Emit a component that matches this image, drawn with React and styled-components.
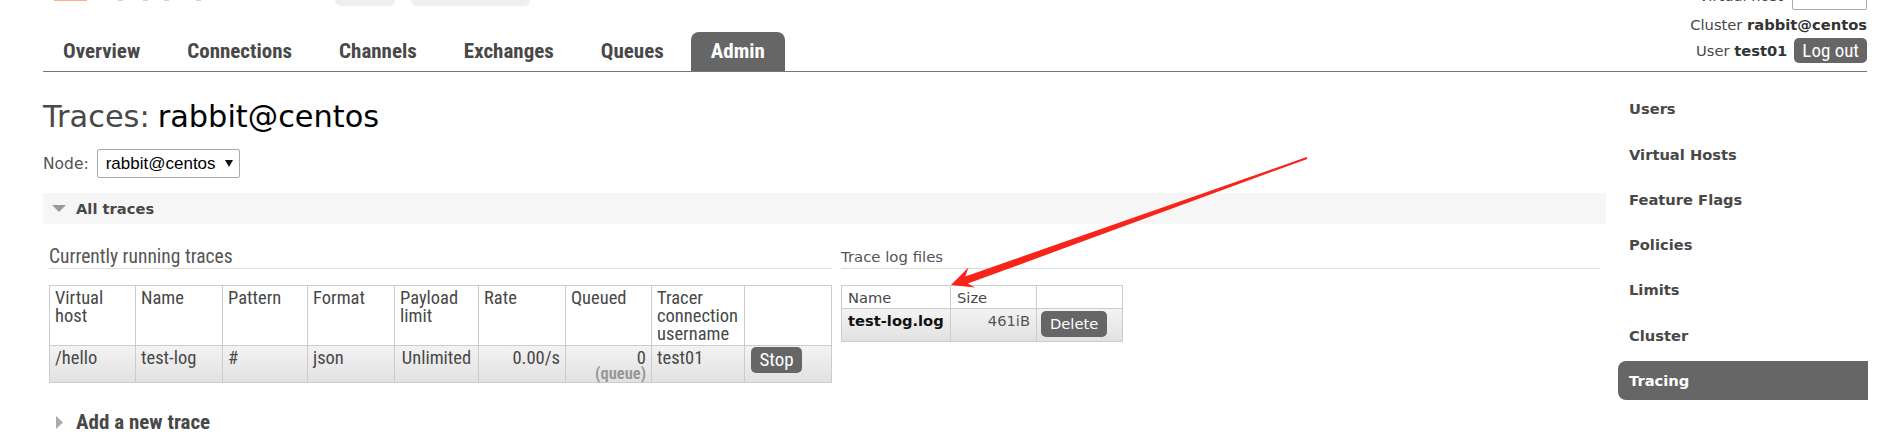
import React from 'react';
import styled, { createGlobalStyle } from 'styled-components';

const VERDANA = `"DejaVu Sans", Verdana, sans-serif`;
const NARROW = `"Roboto Condensed", "Liberation Sans Narrow", "DejaVu Sans Condensed", Roboto, sans-serif`;
const ARIAL = `"Liberation Sans", Arial, sans-serif`;

const Global = createGlobalStyle`
  html, body { margin: 0; padding: 0; background: #fff; }
  body { font-family: ${VERDANA}; font-size: 14.7px; color: #484848; overflow: hidden; }
  #root { width: 1889px; height: 439px; overflow: hidden; }
`;

const Page = styled.div`
  position: relative;
  width: 1889px;
  height: 439px;
  box-sizing: border-box;
  padding: 0 21px 0 43px;
  overflow: hidden;
`;

const Header = styled.header`
  display: flex;
  justify-content: space-between;
  align-items: flex-start;
  border-bottom: 1px solid #777;
  margin-right: 1px;
`;

const HeaderLeft = styled.div`
  display: flex;
  flex-direction: column;
`;

const TopStrip = styled.div`
  margin-top: -34px;
  height: 40px;
  display: flex;
  align-items: flex-start;
`;

const LogoBox = styled.svg`
  display: block;
  margin-left: 11px;
  flex: none;
`;

const GhostButton = styled.div`
  height: 40px;
  width: ${p => p.$w}px;
  margin-left: ${p => p.$ml}px;
  background: #efefef;
  border-radius: 6px;
  flex: none;
`;

const Nav = styled.nav`
  display: flex;
  margin-top: 26px;
  height: 39px;
`;

const Tab = styled.a`
  display: block;
  padding: 0 20px;
  margin-right: 7px;
  line-height: 39px;
  font-family: ${NARROW};
  font-weight: bold;
  font-size: 21px;
  color: ${p => (p.$active ? '#fff' : '#484848')};
  background: ${p => (p.$active ? '#666' : 'transparent')};
  border-radius: 8px 8px 0 0;
  text-decoration: none;
`;

const HeaderRight = styled.div`
  display: flex;
  flex-direction: column;
  align-items: flex-end;
  margin-top: -14.5px;
  padding-bottom: 8px;
`;

const VhostRow = styled.div`
  display: flex;
  align-items: center;
  gap: 9px;
  height: 24px;
`;

const VhostLabel = styled.span`
  padding-bottom: 5px;
`;

const VhostInput = styled.div`
  width: 75px;
  height: 24px;
  box-sizing: border-box;
  border: 1px solid #aaa;
  border-radius: 2px;
  background: #fff;
`;

const InfoRow = styled.div`
  display: flex;
  align-items: center;
  gap: 7px;
  margin-top: ${p => p.$mt}px;
  line-height: 22px;
  white-space: pre;
`;

const Strong = styled.b`
  color: #333;
`;

const LogoutButton = styled.button`
  height: 25px;
  padding: 0 8px;
  border: none;
  border-radius: 5px;
  background: #666;
  color: #fff;
  font-family: ${NARROW};
  font-size: 19px;
  line-height: 25px;
`;

const Body = styled.div`
  display: flex;
  gap: 12px;
  align-items: flex-start;
`;

const Main = styled.main`
  width: 1563px;
  flex: none;
`;

const Title = styled.h1`
  margin: 28px 0 0;
  font-size: 30.4px;
  line-height: 34px;
  font-weight: normal;
  color: #484848;
  white-space: pre;
`;

const TitleNode = styled.span`
  color: #000;
  margin-left: 8px;
`;

const NodeRow = styled.div`
  display: flex;
  align-items: center;
  gap: 8px;
  margin-top: 15px;
`;

const NodeLabel = styled.span`
  font-size: 15.5px;
  color: #555;
`;

const SelectBox = styled.div`
  width: 143px;
  height: 29px;
  box-sizing: border-box;
  border: 1px solid #aaa;
  border-radius: 2px;
  padding: 0 6px 0 8px;
  display: flex;
  align-items: center;
  justify-content: space-between;
  font-family: ${ARIAL};
  font-size: 17px;
  color: #000;
`;

const SectionBar = styled.div`
  margin-top: 15px;
  height: 31px;
  background: #f6f6f6;
  display: flex;
  align-items: center;
  gap: 10px;
  padding-left: 9px;
  font-weight: bold;
  color: #484848;
`;

const Columns = styled.div`
  display: grid;
  grid-template-columns: 783px 759px;
  column-gap: 9px;
  padding-left: 6px;
  margin-top: 23px;
  align-items: start;
`;

const SubHeading = styled.h3`
  margin: 0;
  line-height: 20px;
  padding-bottom: 1px;
  border-bottom: 1px solid #ddd;
  font-weight: normal;
  color: #555;
  font-family: ${p => (p.$narrow ? NARROW : VERDANA)};
  font-size: ${p => (p.$narrow ? '19.5px' : '14.9px')};
`;

const TableBase = styled.table`
  border-collapse: collapse;
  table-layout: fixed;
  margin-top: 16px;
  color: #484848;
`;

const RunTable = styled(TableBase)`
  width: 782px;
  font-family: ${NARROW};
  font-size: 18.5px;
  line-height: 18px;
`;

const LogTable = styled(TableBase)`
  width: 281px;
  font-family: ${VERDANA};
  font-size: 14.7px;
  line-height: 18px;
`;

const Col = styled.col`
  width: ${p => p.$w}px;
`;

const HeadRow = styled.tr`
  background: #fff;
`;

const DataRow = styled.tr`
  background: linear-gradient(#f3f3f3, #e1e1e1);
`;

const Th = styled.th`
  border: 1px solid #ccc;
  padding: ${p => p.$pad || '3px 5px 2px'};
  text-align: left;
  vertical-align: top;
  font-weight: normal;
  color: ${p => p.$color || '#484848'};
`;

const Td = styled.td`
  border: 1px solid #ccc;
  padding: ${p => p.$pad || '3px 5px 1px'};
  text-align: ${p => p.$align || 'left'};
  vertical-align: top;
  font-weight: ${p => (p.$bold ? 'bold' : 'normal')};
  color: ${p => p.$color || '#484848'};
`;

const SubNote = styled.span`
  display: block;
  font-size: 16.5px;
  line-height: 14px;
  font-weight: bold;
  color: #999;
`;

const ActionButton = styled.button`
  display: block;
  height: 26px;
  padding: 0 ${p => p.$px}px;
  border: none;
  border-radius: 5px;
  background: #666;
  color: #fff;
  font-family: ${p => (p.$narrow ? NARROW : VERDANA)};
  font-size: ${p => (p.$narrow ? '19px' : '14.7px')};
  line-height: 26px;
`;

const AddTrace = styled.div`
  margin-top: 28px;
  display: flex;
  align-items: center;
  gap: 13px;
  padding-left: 13px;
  height: 22px;
  font-family: ${NARROW};
  font-weight: bold;
  font-size: 21px;
  color: #484848;
`;

const Sidebar = styled.ul`
  list-style: none;
  margin: 0;
  padding: 17.3px 0 0;
  width: 250px;
  flex: none;
  display: flex;
  flex-direction: column;
  gap: 6.3px;
`;

const SideItem = styled.li`
  height: 39px;
  line-height: 39px;
  padding-left: 11px;
  font-weight: bold;
  color: ${p => (p.$active ? '#fff' : '#484848')};
  background: ${p => (p.$active ? '#666' : 'transparent')};
  border-radius: 8px 0 0 8px;
`;

const Overlay = styled.svg`
  position: absolute;
  top: 0;
  left: 0;
  pointer-events: none;
`;

function Logo() {
  return (
    <LogoBox width="200" height="35" viewBox="0 0 200 35">
      <rect x="0" y="33" width="33" height="2" fill="#ff8c55" opacity="0.7" />
      <rect x="64" y="33.5" width="5" height="1.5" fill="#ff8c55" opacity="0.5" />
      <rect x="89" y="33.5" width="5" height="1.5" fill="#ff8c55" opacity="0.5" />
      <rect x="110" y="33.5" width="5" height="1.5" fill="#ff8c55" opacity="0.5" />
      <rect x="142" y="33.5" width="5" height="1.5" fill="#ff8c55" opacity="0.5" />
    </LogoBox>
  );
}

const tabs = ['Overview', 'Connections', 'Channels', 'Exchanges', 'Queues', 'Admin'];
const side = ['Users', 'Virtual Hosts', 'Feature Flags', 'Policies', 'Limits', 'Cluster', 'Tracing'];

export default function App() {
  return (
    <Page>
      <Global />
      <Header>
        <HeaderLeft>
          <TopStrip>
            <Logo />
            <GhostButton $w={60} $ml={81} />
            <GhostButton $w={119} $ml={16} />
          </TopStrip>
          <Nav>
            {tabs.map(t => (
              <Tab key={t} $active={t === 'Admin'}>{t}</Tab>
            ))}
          </Nav>
        </HeaderLeft>
        <HeaderRight>
          <VhostRow>
            <VhostLabel>Virtual host</VhostLabel>
            <VhostInput />
          </VhostRow>
          <InfoRow $mt={4.5}>
            <span>Cluster <Strong>rabbit@centos</Strong></span>
          </InfoRow>
          <InfoRow $mt={2}>
            <span>User <Strong>test01</Strong></span>
            <LogoutButton>Log out</LogoutButton>
          </InfoRow>
        </HeaderRight>
      </Header>

      <Body>
        <Main>
          <Title>Traces:<TitleNode>rabbit@centos</TitleNode></Title>
          <NodeRow>
            <NodeLabel>Node:</NodeLabel>
            <SelectBox>
              <span>rabbit@centos</span>
              <svg width="8" height="7" viewBox="0 0 8 7"><path d="M0 0 L8 0 L4 7 Z" fill="#111" /></svg>
            </SelectBox>
          </NodeRow>

          <SectionBar>
            <svg width="14" height="7" viewBox="0 0 14 7"><path d="M0 0 L14 0 L7 7 Z" fill="#999" /></svg>
            <span>All traces</span>
          </SectionBar>

          <Columns>
            <div>
              <SubHeading $narrow>Currently running traces</SubHeading>
              <RunTable>
                <colgroup>
                  <Col $w={86} /><Col $w={87} /><Col $w={85} /><Col $w={87} /><Col $w={84} />
                  <Col $w={87} /><Col $w={86} /><Col $w={93} /><Col $w={87} />
                </colgroup>
                <thead>
                  <HeadRow>
                    <Th>Virtual host</Th>
                    <Th>Name</Th>
                    <Th>Pattern</Th>
                    <Th>Format</Th>
                    <Th>Payload limit</Th>
                    <Th>Rate</Th>
                    <Th>Queued</Th>
                    <Th>Tracer connection username</Th>
                    <Th></Th>
                  </HeadRow>
                </thead>
                <tbody>
                  <DataRow>
                    <Td>/hello</Td>
                    <Td>test-log</Td>
                    <Td>#</Td>
                    <Td>json</Td>
                    <Td $align="center">Unlimited</Td>
                    <Td $align="right">0.00/s</Td>
                    <Td $align="right">0<SubNote>(queue)</SubNote></Td>
                    <Td>test01</Td>
                    <Td $pad="1px 6px 1px">
                      <ActionButton $narrow $px={8.5}>Stop</ActionButton>
                    </Td>
                  </DataRow>
                </tbody>
              </RunTable>
            </div>
            <div>
              <SubHeading>Trace log files</SubHeading>
              <LogTable>
                <colgroup>
                  <Col $w={109} /><Col $w={86} /><Col $w={86} />
                </colgroup>
                <thead>
                  <HeadRow>
                    <Th $pad="3px 6px 1px">Name</Th>
                    <Th $pad="3px 6px 1px">Size</Th>
                    <Th $pad="3px 6px 1px"></Th>
                  </HeadRow>
                </thead>
                <tbody>
                  <DataRow>
                    <Td $pad="3px 6px 4px" $bold $color="#111">test-log.log</Td>
                    <Td $pad="3px 6px 4px" $align="right" $color="#555">461iB</Td>
                    <Td $pad="2px 4px 4px">
                      <ActionButton $px={9}>Delete</ActionButton>
                    </Td>
                  </DataRow>
                </tbody>
              </LogTable>
            </div>
          </Columns>

          <AddTrace>
            <svg width="7" height="13" viewBox="0 0 7 13"><path d="M0 0 L7 6.5 L0 13 Z" fill="#aaa" /></svg>
            <span>Add a new trace</span>
          </AddTrace>
        </Main>

        <Sidebar>
          {side.map(s => (
            <SideItem key={s} $active={s === 'Tracing'}>{s}</SideItem>
          ))}
        </Sidebar>
      </Body>

      <Overlay width="1889" height="439" viewBox="0 0 1889 439">
        <polygon
          points="951,285 975,287.5 967.8,283.6 1307.3,158.9 1306.7,157.1 965.2,276.4 968.6,267.2"
          fill="#f8241a"
        />
      </Overlay>
    </Page>
  );
}
